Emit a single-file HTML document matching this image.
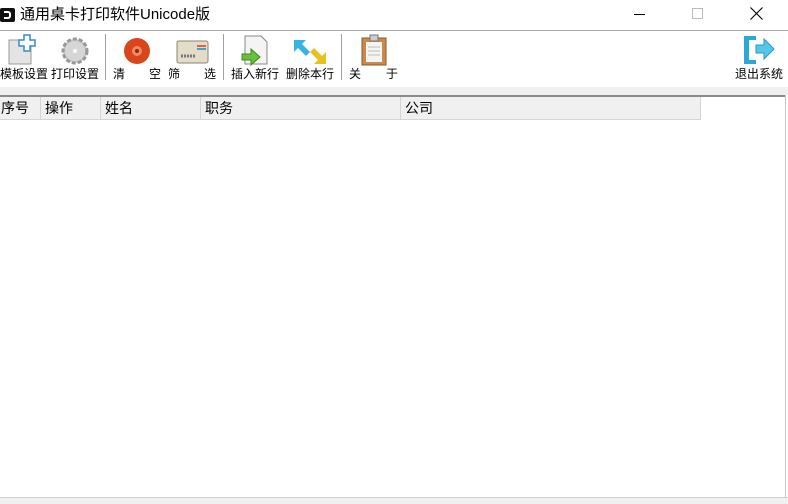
<!DOCTYPE html>
<html><head><meta charset="utf-8"><style>
*{margin:0;padding:0;box-sizing:border-box}
body{width:788px;height:504px;background:#fff;font-family:"Liberation Sans","Noto Sans CJK SC",sans-serif;position:relative;overflow:hidden;color:#000}
.a{position:absolute}
.t{font-size:12px;line-height:14px;white-space:nowrap}
.sep{position:absolute;top:34px;width:1px;height:46px;background:#a0a0a0}
.hd{position:absolute;top:97px;height:23px;font-size:14px;line-height:22px;border-right:1px solid #d5d5d5;padding-left:4px;background:#f0f0f0}
</style></head><body>
<div class="a" style="left:0;top:8px;width:15px;height:14px;background:#111;border-radius:2px"></div>
<div class="a" style="left:4px;top:11px;width:7px;height:8px;border:2px solid #fff;border-left:none;border-radius:0 3px 3px 0"></div>
<div class="a" style="left:20px;top:5px;font-size:15px;line-height:20px">通用桌卡打印软件Unicode版</div>
<div class="a" style="left:634px;top:14px;width:11px;height:1px;background:#000"></div>
<div class="a" style="left:692px;top:8px;width:11px;height:11px;border:1px solid #bbb"></div>
<svg class="a" style="left:750px;top:7px" width="13" height="13"><path d="M0.5 0.5L12.5 12.5M12.5 0.5L0.5 12.5" stroke="#000" stroke-width="1.1"/></svg>
<div class="a" style="left:0;top:30px;width:788px;height:1px;background:#a8a8a8"></div>
<svg class="a" style="left:6px;top:34px" width="30" height="32"><rect x="3" y="6" width="22" height="24" fill="#e4e4e4" stroke="#999"/><path d="M18 1h6v5h5v6h-5v5h-6v-5h-5v-6h5z" fill="#fff" stroke="#3a8ad0" stroke-width="1.5"/></svg>
<svg class="a" style="left:60px;top:36px" width="30" height="30"><circle cx="15" cy="15" r="12" fill="#c8c8c8" stroke="#999" stroke-dasharray="4 2" stroke-width="3"/><circle cx="15" cy="15" r="10" fill="#d6d6d6"/><circle cx="15" cy="15" r="2" fill="#fff"/></svg>
<div class="sep" style="left:105px"></div>
<svg class="a" style="left:123px;top:37px" width="30" height="28"><circle cx="14" cy="14" r="13" fill="#d9461e"/><circle cx="14" cy="14" r="5" fill="#f08a60"/><circle cx="14" cy="14" r="2" fill="#8a2a10"/></svg>
<svg class="a" style="left:176px;top:40px" width="34" height="24"><rect x="1" y="1" width="31" height="22" rx="2" fill="#e2dcc8" stroke="#8a8470"/><rect x="21" y="5" width="9" height="2" fill="#e06040"/><rect x="21" y="8" width="9" height="2" fill="#40a0d0"/><path d="M5 16h14" stroke="#777" stroke-dasharray="2 1" stroke-width="3"/></svg>
<div class="sep" style="left:223px"></div>
<svg class="a" style="left:240px;top:34px" width="32" height="32"><path d="M5 2h16l6 6v22H5z" fill="#f4f4f4" stroke="#888"/><path d="M2 20h9v-5l9 8-9 8v-5H2z" fill="#6cbf3a" stroke="#3d8a20"/></svg>
<svg class="a" style="left:292px;top:38px" width="36" height="28"><path d="M2 2h12l-4 4 8 8-4 4-8-8-4 4z" fill="#38b4e0"/><path d="M34 26H22l4-4-8-8 4-4 8 8 4-4z" fill="#e8c020"/></svg>
<div class="sep" style="left:341px"></div>
<svg class="a" style="left:360px;top:34px" width="28" height="32"><rect x="2" y="4" width="24" height="27" fill="#c98a50" stroke="#8a5a2a"/><rect x="6" y="8" width="16" height="20" fill="#f4f4f0"/><rect x="10" y="1" width="8" height="6" fill="#ccc" stroke="#777"/><path d="M8 13h12M8 17h12M8 21h12" stroke="#bbb"/></svg>
<svg class="a" style="left:742px;top:34px" width="34" height="32"><path d="M2 2h12v4H7v20h7v4H2z" fill="#2aa8d8"/><path d="M14 11h8V5l10 10-10 10v-6h-8z" fill="#54c8ea" stroke="#2a98c8"/></svg>
<div class="a t" style="left:0;top:67px">模板设置</div>
<div class="a t" style="left:51px;top:67px">打印设置</div>
<div class="a t" style="left:113px;top:67px">清</div>
<div class="a t" style="left:149px;top:67px">空</div>
<div class="a t" style="left:168px;top:67px">筛</div>
<div class="a t" style="left:204px;top:67px">选</div>
<div class="a t" style="left:231px;top:67px">插入新行</div>
<div class="a t" style="left:286px;top:67px">删除本行</div>
<div class="a t" style="left:349px;top:67px">关</div>
<div class="a t" style="left:386px;top:67px">于</div>
<div class="a t" style="left:735px;top:67px">退出系统</div>
<div class="a" style="left:0;top:87px;width:788px;height:8px;background:#f0f0f0"></div>
<div class="a" style="left:0;top:95px;width:786px;height:2px;background:#8a8a8a"></div>
<div class="a" style="left:785px;top:95px;width:1px;height:403px;background:#c8c8c8"></div>
<div class="a" style="left:0;top:497px;width:788px;height:1px;background:#d0d0d0"></div>
<div class="a" style="left:0;top:498px;width:788px;height:6px;background:#f0f0f0"></div>
<div class="hd" style="left:0;width:41px;padding-left:1px">序号</div>
<div class="hd" style="left:41px;width:60px">操作</div>
<div class="hd" style="left:101px;width:100px">姓名</div>
<div class="hd" style="left:201px;width:200px">职务</div>
<div class="hd" style="left:401px;width:300px">公司</div>
<div class="a" style="left:0;top:119px;width:701px;height:1px;background:#d5d5d5"></div>
</body></html>
